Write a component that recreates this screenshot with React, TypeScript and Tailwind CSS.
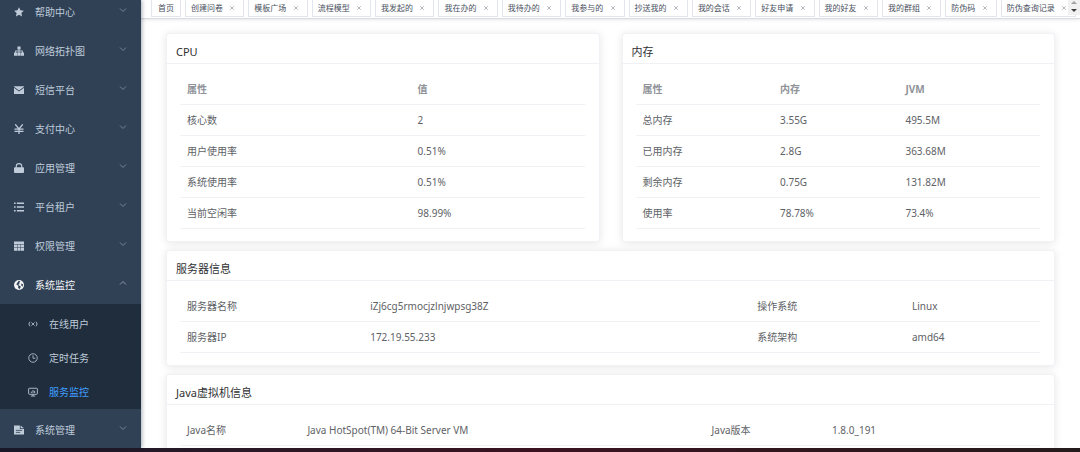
import type { ReactNode } from "react";

type MenuItem = { label: string; icon: ReactNode; open?: boolean };

const menus: MenuItem[] = [
  {
    label: "帮助中心",
    icon: <path d="M8 .2l2.4 5 5.4.7-4 3.8 1.1 5.5L8 12.5l-4.9 2.7 1.1-5.5-4-3.8 5.4-.7z" />,
  },
  {
    label: "网络拓扑图",
    icon: (
      <path d="M5.5 .6h5v5H8.7v1.6h5.4v3.2H16v5h-5v-5h1.7V8.6h-4v1.8h1.8v5h-5v-5h1.8V8.6h-4v1.8H5v5H0v-5h1.9V7.2h5.4V5.6H5.5z" />
    ),
  },
  {
    label: "短信平台",
    icon: (
      <>
        <path d="M0 4.4v9.8h16V4.4l-8 6z" />
        <path d="M0 1.8h16v1L8 8.6 0 2.8z" />
      </>
    ),
  },
  {
    label: "支付中心",
    icon: (
      <path
        d="M2 .5L8 8l6-7.5M8 8v8M.8 8h14.4M.8 11.8h14.4"
        fill="none"
        stroke="currentColor"
        strokeWidth="2"
      />
    ),
  },
  {
    label: "应用管理",
    icon: (
      <>
        <path d="M3.6 8V5.4a4.4 4.4 0 0 1 8.8 0V8" fill="none" stroke="currentColor" strokeWidth="1.7" />
        <rect x="0" y="6.6" width="16" height="9.2" rx="1.5" />
      </>
    ),
  },
  {
    label: "平台租户",
    icon: <path d="M0 .8h2.6v2.4H0zM4.6 .8H16v2.4H4.6zM0 6.8h2.6v2.4H0zM4.6 6.8H16v2.4H4.6zM0 12.8h2.6v2.4H0zM4.6 12.8H16v2.4H4.6z" />,
  },
  {
    label: "权限管理",
    icon: (
      <path d="M0 .6h16v4H0zM0 5.4h4.9v4.4H0zM5.6 5.4h4.8v4.4H5.6zM11.1 5.4H16v4.4h-4.9zM0 10.6h4.9v4.8H0zM5.6 10.6h4.8v4.8H5.6zM11.1 10.6H16v4.8h-4.9z" />
    ),
  },
  {
    label: "系统监控",
    open: true,
    icon: (
      <>
        <circle cx="8" cy="8" r="8" />
        <path d="M7.6 1.2l2.6 1.2-2 2.2.6 2-2.2.8 1.6 1.8 2.4.4-.2 2.2-1.6 2.8-2.2-2.4.2-2.4-1.2-2-2-.6 1.4-2.6z" fill="#304156" />
        <path d="M11.4 5.4l3 1.4-.6 3.8-2-2.4z" fill="#304156" />
      </>
    ),
  },
];

const subMenus = [
  {
    label: "在线用户",
    active: false,
    icon: (
      <path
        d="M3.5 4.5C1.5 4.5 3 8 1 8c2 0 .5 3.5 2.5 3.5M12.5 4.5c2 0 .5 3.5 2.5 3.5-2 0-.5 3.5-2.5 3.5M5.4 5.5l5 5M10.4 5.5l-5 5"
        strokeWidth="1.3"
      />
    ),
  },
  {
    label: "定时任务",
    active: false,
    icon: (
      <>
        <circle cx="8" cy="8" r="6.8" strokeWidth="1.3" />
        <path d="M8 3.8V8.4h3.6" strokeWidth="1.3" />
      </>
    ),
  },
  {
    label: "服务监控",
    active: true,
    icon: (
      <>
        <rect x="1" y="2" width="14" height="9.6" rx="1" strokeWidth="1.4" />
        <path d="M4.5 14.4h7M8 11.6v2.8M5.4 9.5V7.4M8 9.5V4.8M10.6 9.5V6.2" strokeWidth="1.4" />
      </>
    ),
  },
];

const tabs = [
  "创建问卷",
  "模板广场",
  "流程模型",
  "我发起的",
  "我在办的",
  "我待办的",
  "我参与的",
  "抄送我的",
  "我的会话",
  "好友申请",
  "我的好友",
  "我的群组",
  "防伪码",
  "防伪查询记录",
];

const cpuRows = [
  ["核心数", "2"],
  ["用户使用率", "0.51%"],
  ["系统使用率", "0.51%"],
  ["当前空闲率", "98.99%"],
];

const memRows = [
  ["总内存", "3.55G", "495.5M"],
  ["已用内存", "2.8G", "363.68M"],
  ["剩余内存", "0.75G", "131.82M"],
  ["使用率", "78.78%", "73.4%"],
];

const serverRows = [
  ["服务器名称", "iZj6cg5rmocjzlnjwpsg38Z", "操作系统", "Linux"],
  ["服务器IP", "172.19.55.233", "系统架构", "amd64"],
];

const jvmRows = [["Java名称", "Java HotSpot(TM) 64-Bit Server VM", "Java版本", "1.8.0_191"]];

const docIcon = (
  <>
    <path d="M0 .8h9.4v5.4H16v9H0z" />
    <path d="M10.6 .6L16 5h-5.4z" />
    <path d="M3 8.6h10M3 11.8h7" stroke="#304156" strokeWidth="1.3" />
  </>
);

function Menu({ label, icon, open = false, last = false }: MenuItem & { last?: boolean }) {
  return (
    <button
      type="button"
      aria-expanded={open}
      className={`flex w-full shrink-0 items-center px-[14px] text-left ${last ? "h-[41px]" : "h-[39px]"} ${
        open ? "text-[#f4f4f5]" : "text-[#bfcbd9]"
      }`}
    >
      <svg viewBox="0 0 16 16" fill="currentColor" className="size-[10px] shrink-0">
        {icon}
      </svg>
      <span className="ml-[11px] flex-1">{label}</span>
      <svg
        viewBox="0 0 8 8"
        fill="none"
        stroke="currentColor"
        strokeWidth="0.8"
        className="mb-1 size-2 shrink-0 opacity-60"
      >
        {open ? <path d="M1 5.5l3-3 3 3" /> : <path d="M1 2.5l3 3 3-3" />}
      </svg>
    </button>
  );
}

function Card({ title, children }: { title: string; children: ReactNode }) {
  return (
    <section className="min-w-0 rounded-[3px] border border-[#f0f2f5] bg-white shadow-[0_1px_8px_rgba(0,0,0,0.1)]">
      <h2 className="flex h-[30px] items-center border-b border-[#eff1f5] px-[9px] pt-[6px] text-[11px] text-[#303133]">
        {title}
      </h2>
      <div className="pt-[10px] pr-[14px] pb-3 pl-[13px]">{children}</div>
    </section>
  );
}

function DataTable({ head, rows, cols }: { head?: string[]; rows: string[][]; cols: string[] }) {
  return (
    <table className="w-full table-fixed border-separate border-spacing-0 text-left text-[#606266]">
      <colgroup>
        {cols.map((c, i) => (
          <col key={i} className={c} />
        ))}
      </colgroup>
      {head && (
        <thead>
          <tr>
            {head.map((h) => (
              <th key={h} scope="col" className="h-[31px] border-b border-[#eff1f5] px-[7px] font-bold text-[#909399]">
                {h}
              </th>
            ))}
          </tr>
        </thead>
      )}
      <tbody>
        {rows.map((row) => (
          <tr key={row[0]}>
            {row.map((cell, i) => (
              <td key={i} className="h-[31px] border-b border-[#eff1f5] px-[7px] whitespace-nowrap">
                {cell}
              </td>
            ))}
          </tr>
        ))}
      </tbody>
    </table>
  );
}

export default function App() {
  return (
    <div className="flex h-screen flex-col overflow-hidden bg-white font-['Noto_Sans','Noto_Sans_CJK_SC',sans-serif] text-[10px] leading-[14px]">
      <div className="flex min-h-0 flex-1">
        {/* Sidebar */}
        <aside className="z-10 w-[141px] shrink-0 overflow-hidden bg-[#304156] shadow-[1px_0_4px_rgba(0,21,41,0.35)]">
          <nav className="-mt-2 flex flex-col">
            {menus.map((m) => (
              <Menu key={m.label} {...m} />
            ))}
            <div className="bg-[#1f2d3d] pt-[3px]">
              {subMenus.map((s) => (
                <a key={s.label} href="#" className="flex h-[34px] items-center pl-7 text-[#bfcbd9]">
                  <svg viewBox="0 0 16 16" fill="none" stroke="currentColor" className="size-[10px] shrink-0">
                    {s.icon}
                  </svg>
                  <span className={`ml-[11px] ${s.active ? "text-[#409eff]" : ""}`}>{s.label}</span>
                </a>
              ))}
            </div>
            <Menu label="系统管理" icon={docIcon} last />
          </nav>
        </aside>

        <div className="flex min-w-0 flex-1 flex-col">
          {/* Opened tabs */}
          <div className="relative flex h-[19px] shrink-0 items-start gap-1 border-b border-[#d8dce5] pr-1 pl-[10px] text-[8px] text-[#495060] shadow-[0_1px_3px_rgba(0,0,0,0.1)]">
            <a href="#" className="flex h-[17px] items-center border-x border-b border-[#e2e5eb] px-[6px] whitespace-nowrap">
              首页
            </a>
            {tabs.map((t) => (
              <div
                key={t}
                className="flex h-[17px] grow items-center justify-between border-x border-b border-[#e2e5eb] pr-2 pl-[5px] whitespace-nowrap"
              >
                <a href="#">{t}</a>
                <button type="button" aria-label={`关闭${t}`} className="text-[#a0a6b0]">
                  <svg viewBox="0 0 6 6" stroke="currentColor" strokeWidth="0.8" className="size-[6px]">
                    <path d="M1.2 1.2l3.6 3.6M4.8 1.2L1.2 4.8" />
                  </svg>
                </button>
              </div>
            ))}
            <div className="absolute top-0 right-0 flex h-[15px] w-3 flex-col bg-[#f1f1f1]">
              <button type="button" aria-label="向上" className="flex h-1 items-center justify-center">
                <svg viewBox="0 0 6 3" fill="#a3a3a3" className="h-[3px] w-[6px]">
                  <path d="M0 3l3-3 3 3z" />
                </svg>
              </button>
              <button type="button" aria-label="向下" className="flex flex-1 items-center justify-center">
                <svg viewBox="0 0 6 3" fill="#404040" className="mt-[2px] h-[3px] w-[6px]">
                  <path d="M0 0h6L3 3z" />
                </svg>
              </button>
            </div>
          </div>

          {/* Monitor panels */}
          <main className="flex min-h-0 flex-1 flex-col gap-2 overflow-hidden px-[25px] pt-[14px]">
            <div className="grid shrink-0 grid-cols-2 gap-[22px]">
              <Card title="CPU">
                <DataTable head={["属性", "值"]} rows={cpuRows} cols={["w-[57%]", "w-[43%]"]} />
              </Card>
              <Card title="内存">
                <DataTable head={["属性", "内存", "JVM"]} rows={memRows} cols={["w-[34%]", "w-[31%]", "w-[35%]"]} />
              </Card>
            </div>
            <Card title="服务器信息">
              <DataTable rows={serverRows} cols={["w-[21.3%]", "w-[45%]", "w-[18%]", "w-[15.7%]"]} />
            </Card>
            <Card title="Java虚拟机信息">
              <DataTable rows={jvmRows} cols={["w-[14%]", "w-[47%]", "w-[14%]", "w-[25%]"]} />
            </Card>
          </main>
        </div>
      </div>
      <div className="h-1 shrink-0 bg-linear-to-r from-[#1a1a2a] via-[#3a1220] to-[#241a1c]" />
    </div>
  );
}
